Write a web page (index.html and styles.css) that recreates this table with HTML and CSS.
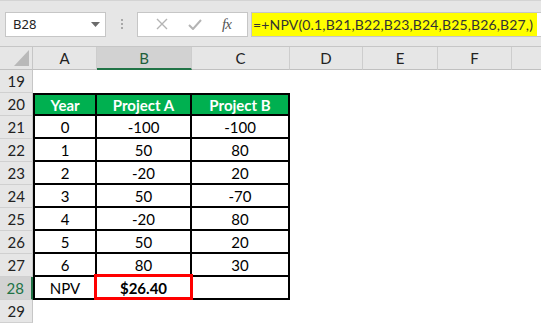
FILE: index.html
```html
<!DOCTYPE html>
<html>

<head>
    <meta charset="UTF-8">
    <meta name="viewport" content="width=device-width, initial-scale=1.0">
    <title>NPV</title>
    <link rel="stylesheet" href="styles.css">
</head>

<body>
    <div class="toolbar">
        <div class="name-box">
            <span>B28</span>
            <svg class="name-arrow" width="9" height="5" viewBox="0 0 9 5"><path d="M0 0h9L4.5 5z" fill="#6b6b6b"/></svg>
        </div>
        <div class="grip"><i></i><i></i><i></i></div>
        <div class="formula-buttons">
            <svg width="12" height="12" viewBox="0 0 12 12"><path d="M1 1l10 10M11 1L1 11" stroke="#b4b4b4" stroke-width="1.4" fill="none"/></svg>
            <svg width="14" height="11" viewBox="0 0 14 11"><path d="M1 6l4 4 8-9" stroke="#b4b4b4" stroke-width="2" fill="none"/></svg>
            <span class="fx">fx</span>
        </div>
        <div class="formula-input">
            <span class="formula-text">=+NPV(0.1,B21,B22,B23,B24,B25,B26,B27,)</span>
        </div>
    </div>

    <div class="sheet">
        <!-- column headers -->
        <div class="corner"><svg width="15" height="16" viewBox="0 0 15 16"><path d="M15 0v16H0z" fill="#b9b9b9"/></svg></div>
        <div class="col-head">A</div>
        <div class="col-head active">B</div>
        <div class="col-head">C</div>
        <div class="col-head">D</div>
        <div class="col-head">E</div>
        <div class="col-head">F</div>
        <div class="col-head last"></div>

        <div class="row-head">19</div>
        <div class="cell"></div><div class="cell"></div><div class="cell"></div>
        <div class="cell"></div><div class="cell"></div><div class="cell"></div><div class="cell"></div>

        <div class="row-head">20</div>
        <div class="cell tb head first top">Year</div>
        <div class="cell tb head top">Project A</div>
        <div class="cell tb head top">Project B</div>
        <div class="cell"></div><div class="cell"></div><div class="cell"></div><div class="cell"></div>

        <div class="row-head">21</div>
        <div class="cell tb first">0</div><div class="cell tb">-100</div><div class="cell tb">-100</div>
        <div class="cell"></div><div class="cell"></div><div class="cell"></div><div class="cell"></div>

        <div class="row-head">22</div>
        <div class="cell tb first">1</div><div class="cell tb">50</div><div class="cell tb">80</div>
        <div class="cell"></div><div class="cell"></div><div class="cell"></div><div class="cell"></div>

        <div class="row-head">23</div>
        <div class="cell tb first">2</div><div class="cell tb">-20</div><div class="cell tb">20</div>
        <div class="cell"></div><div class="cell"></div><div class="cell"></div><div class="cell"></div>

        <div class="row-head">24</div>
        <div class="cell tb first">3</div><div class="cell tb">50</div><div class="cell tb">-70</div>
        <div class="cell"></div><div class="cell"></div><div class="cell"></div><div class="cell"></div>

        <div class="row-head">25</div>
        <div class="cell tb first">4</div><div class="cell tb">-20</div><div class="cell tb">80</div>
        <div class="cell"></div><div class="cell"></div><div class="cell"></div><div class="cell"></div>

        <div class="row-head">26</div>
        <div class="cell tb first">5</div><div class="cell tb">50</div><div class="cell tb">20</div>
        <div class="cell"></div><div class="cell"></div><div class="cell"></div><div class="cell"></div>

        <div class="row-head">27</div>
        <div class="cell tb first">6</div><div class="cell tb">80</div><div class="cell tb">30</div>
        <div class="cell"></div><div class="cell"></div><div class="cell"></div><div class="cell"></div>

        <div class="row-head active">28</div>
        <div class="cell tb first">NPV</div><div class="cell tb result">$26.40</div><div class="cell tb"></div>
        <div class="cell"></div><div class="cell"></div><div class="cell"></div><div class="cell"></div>

        <div class="row-head">29</div>
        <div class="cell"></div><div class="cell"></div><div class="cell"></div>
        <div class="cell"></div><div class="cell"></div><div class="cell"></div><div class="cell"></div>
    </div>
</body>

</html>
```

FILE: styles.css
```css
/* spreadsheet window */
body {
    margin: 0;
    font-family: Lato, "Liberation Sans", sans-serif;
    background-color: #fff;
    overflow: hidden;
}

.toolbar {
    display: flex;
    align-items: center;
    height: 47px;
    padding-left: 5px;
    padding-top: 1px;
    box-sizing: border-box;
    background-color: #e6e6e6;
    border-top: 1px solid #d4d4d4;
    border-bottom: 1px solid #c6c6c6;
}

.name-box {
    display: flex;
    flex-shrink: 0;
    align-items: center;
    justify-content: space-between;
    width: 101px;
    height: 25px;
    box-sizing: border-box;
    padding: 0 5px 0 7px;
    background-color: #fff;
    border: 1px solid #c6c6c6;
    font-family: "Noto Sans", sans-serif;
    font-size: 13px;
    color: #222;
}

.name-arrow {
    margin-top: 1px;
}

.grip {
    display: flex;
    flex-direction: column;
    flex-shrink: 0;
    gap: 2px;
    width: 31px;
    align-items: center;
}

.grip i {
    width: 2px;
    height: 2px;
    background-color: #a8a8a8;
}

.formula-buttons {
    display: flex;
    flex-shrink: 0;
    align-items: center;
    justify-content: space-around;
    width: 111px;
    height: 25px;
    box-sizing: border-box;
    padding: 0 6px 0 8px;
    background-color: #fff;
    border: 1px solid #c6c6c6;
}

.fx {
    font-family: "Liberation Serif", serif;
    font-style: italic;
    font-size: 15px;
    color: #555;
    letter-spacing: -1px;
}

.formula-input {
    flex: 1;
    min-width: 0;
    overflow: hidden;
    white-space: nowrap;
    height: 25px;
    margin-left: 3px;
    box-sizing: border-box;
    background-color: #fff;
    border: 1px solid #c6c6c6;
    border-right: none;
}

.formula-text {
    display: inline-block;
    height: 23px;
    line-height: 23px;
    padding: 0 4px 0 1px;
    background-color: #ffff00;
    font-size: 14px;
    letter-spacing: 0.15px;
    color: #333;
}

/* grid */
.sheet {
    display: grid;
    grid-template-columns: 33px 64px 95px 98px 73px 75px 74px 1fr;
    grid-auto-rows: 23px;
}

.corner,
.col-head {
    background-color: #e6e6e6;
    border-bottom: 1px solid #c0c0c0;
    box-sizing: border-box;
}

.corner {
    display: flex;
    align-items: flex-end;
    justify-content: flex-end;
    padding: 0 3px 3px 0;
    border-right: 1px solid #c6c6c6;
}

.col-head {
    display: flex;
    align-items: center;
    justify-content: center;
    font-size: 15px;
    color: #222;
    border-right: 1px solid #cdcdcd;
}

.col-head.active {
    background-color: #d2d2d2;
    border-bottom: 2px solid #217346;
    color: #1e5e3a;
}

.col-head.last {
    border-right: none;
}

.row-head {
    display: flex;
    align-items: center;
    justify-content: flex-end;
    padding-right: 7px;
    background-color: #e6e6e6;
    border-bottom: 1px solid #d0d0d0;
    border-right: 1px solid #c6c6c6;
    box-sizing: border-box;
    font-size: 15px;
    color: #222;
}

.row-head.active {
    background-color: #d2d2d2;
    color: #217346;
    border-right: 2px solid #217346;
}

.cell {
    display: flex;
    align-items: center;
    justify-content: center;
    box-sizing: border-box;
    font-size: 15px;
    color: #000;
}

.tb {
    border-right: 2px solid #000;
    border-bottom: 2px solid #000;
}

.tb.first {
    border-left: 2px solid #000;
}

.tb.top {
    border-top: 2px solid #000;
}

.head {
    background-color: #00b050;
    color: #fff;
    font-weight: bold;
}

.result {
    position: relative;
    font-weight: bold;
}

.result::after {
    content: "";
    position: absolute;
    left: -3px;
    top: -3px;
    right: -3px;
    bottom: -2px;
    border: 3px solid #ff0000;
}
```
